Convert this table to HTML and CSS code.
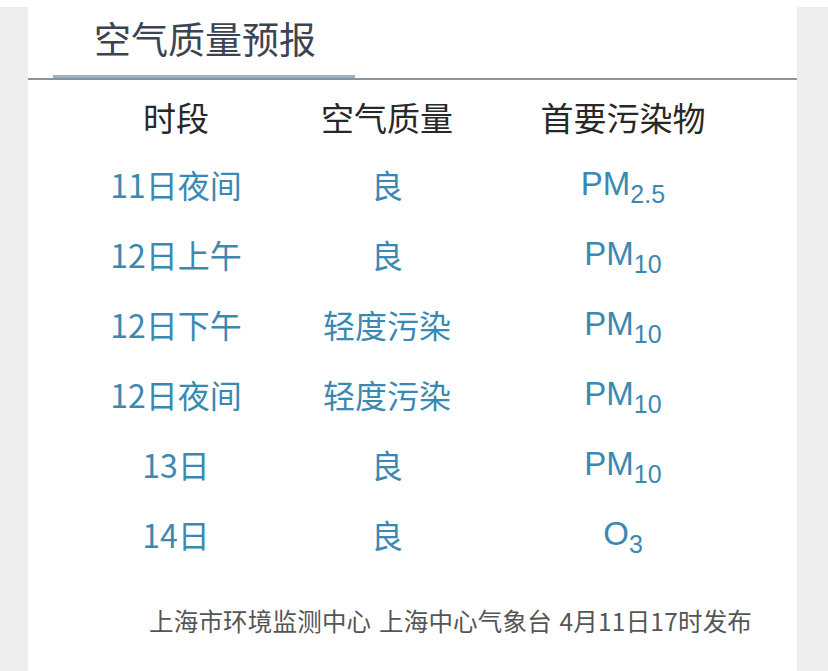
FILE: index.html
```html
<!DOCTYPE html>
<html lang="zh-CN">
<head>
<meta charset="utf-8">
<title>空气质量预报</title>
<link rel="stylesheet" href="styles.css">
</head>
<body>
<div class="page">
  <div class="side side-left"></div>
  <main class="card">
    <header class="title-wrap">
      <h1 class="title">空气质量预报</h1>
    </header>
    <div class="table">
      <div class="row head">
        <div class="cell">时段</div>
        <div class="cell">空气质量</div>
        <div class="cell">首要污染物</div>
      </div>
      <div class="row">
        <div class="cell">11日夜间</div>
        <div class="cell">良</div>
        <div class="cell latin">PM<span class="sub">2.5</span></div>
      </div>
      <div class="row">
        <div class="cell">12日上午</div>
        <div class="cell">良</div>
        <div class="cell latin">PM<span class="sub">10</span></div>
      </div>
      <div class="row">
        <div class="cell">12日下午</div>
        <div class="cell">轻度污染</div>
        <div class="cell latin">PM<span class="sub">10</span></div>
      </div>
      <div class="row">
        <div class="cell">12日夜间</div>
        <div class="cell">轻度污染</div>
        <div class="cell latin">PM<span class="sub">10</span></div>
      </div>
      <div class="row">
        <div class="cell">13日</div>
        <div class="cell">良</div>
        <div class="cell latin">PM<span class="sub">10</span></div>
      </div>
      <div class="row">
        <div class="cell">14日</div>
        <div class="cell">良</div>
        <div class="cell latin">O<span class="sub">3</span></div>
      </div>
    </div>
    <p class="footer">上海市环境监测中心 上海中心气象台 4月11日17时发布</p>
  </main>
  <div class="side side-right"></div>
</div>
</body>
</html>
```

FILE: styles.css
```css
html, body {
  margin: 0;
  padding: 0;
  background: #ffffff;
}

body {
  font-family: "Noto Sans CJK SC", "Noto Sans", sans-serif;
  width: 828px;
  height: 671px;
  overflow: hidden;
}

.page {
  display: flex;
  height: 671px;
}

.side {
  background: #eeeeee;
  margin-top: 7px;
}

.side-left {
  width: 28px;
}

.side-right {
  width: 31px;
}

.card {
  width: 769px;
  background: #ffffff;
  display: flex;
  flex-direction: column;
}

.title-wrap {
  border-bottom: 2px solid #8a949c;
}

.title {
  display: inline-block;
  margin: 16px 0 0 25px;
  padding: 0 39px 15px 41px;
  font-size: 37px;
  line-height: 44px;
  font-weight: 400;
  color: #3c4452;
  border-bottom: 3px solid #9bb2c3;
  vertical-align: bottom;
}

.table {
  margin-top: 5px;
  padding-left: 28px;
  display: flex;
  flex-direction: column;
}

.row {
  display: grid;
  grid-template-columns: 240px 182px 290px;
  height: 70px;
  align-items: center;
  color: #3a89b2;
  font-size: 32px;
}

.row.head {
  height: 64px;
  color: #282828;
  font-size: 33px;
}

.cell {
  text-align: center;
  line-height: 44px;
  white-space: nowrap;
}

.cell.latin {
  font-family: "Liberation Sans", "Noto Sans", sans-serif;
  font-size: 33px;
}

.sub {
  font-size: 25px;
  vertical-align: -8px;
  line-height: 0;
}

.footer {
  margin: 35px 0 0 121px;
  font-size: 24.5px;
  line-height: 34px;
  letter-spacing: 0.2px;
  word-spacing: 2px;
  color: #555555;
  white-space: nowrap;
}
```
